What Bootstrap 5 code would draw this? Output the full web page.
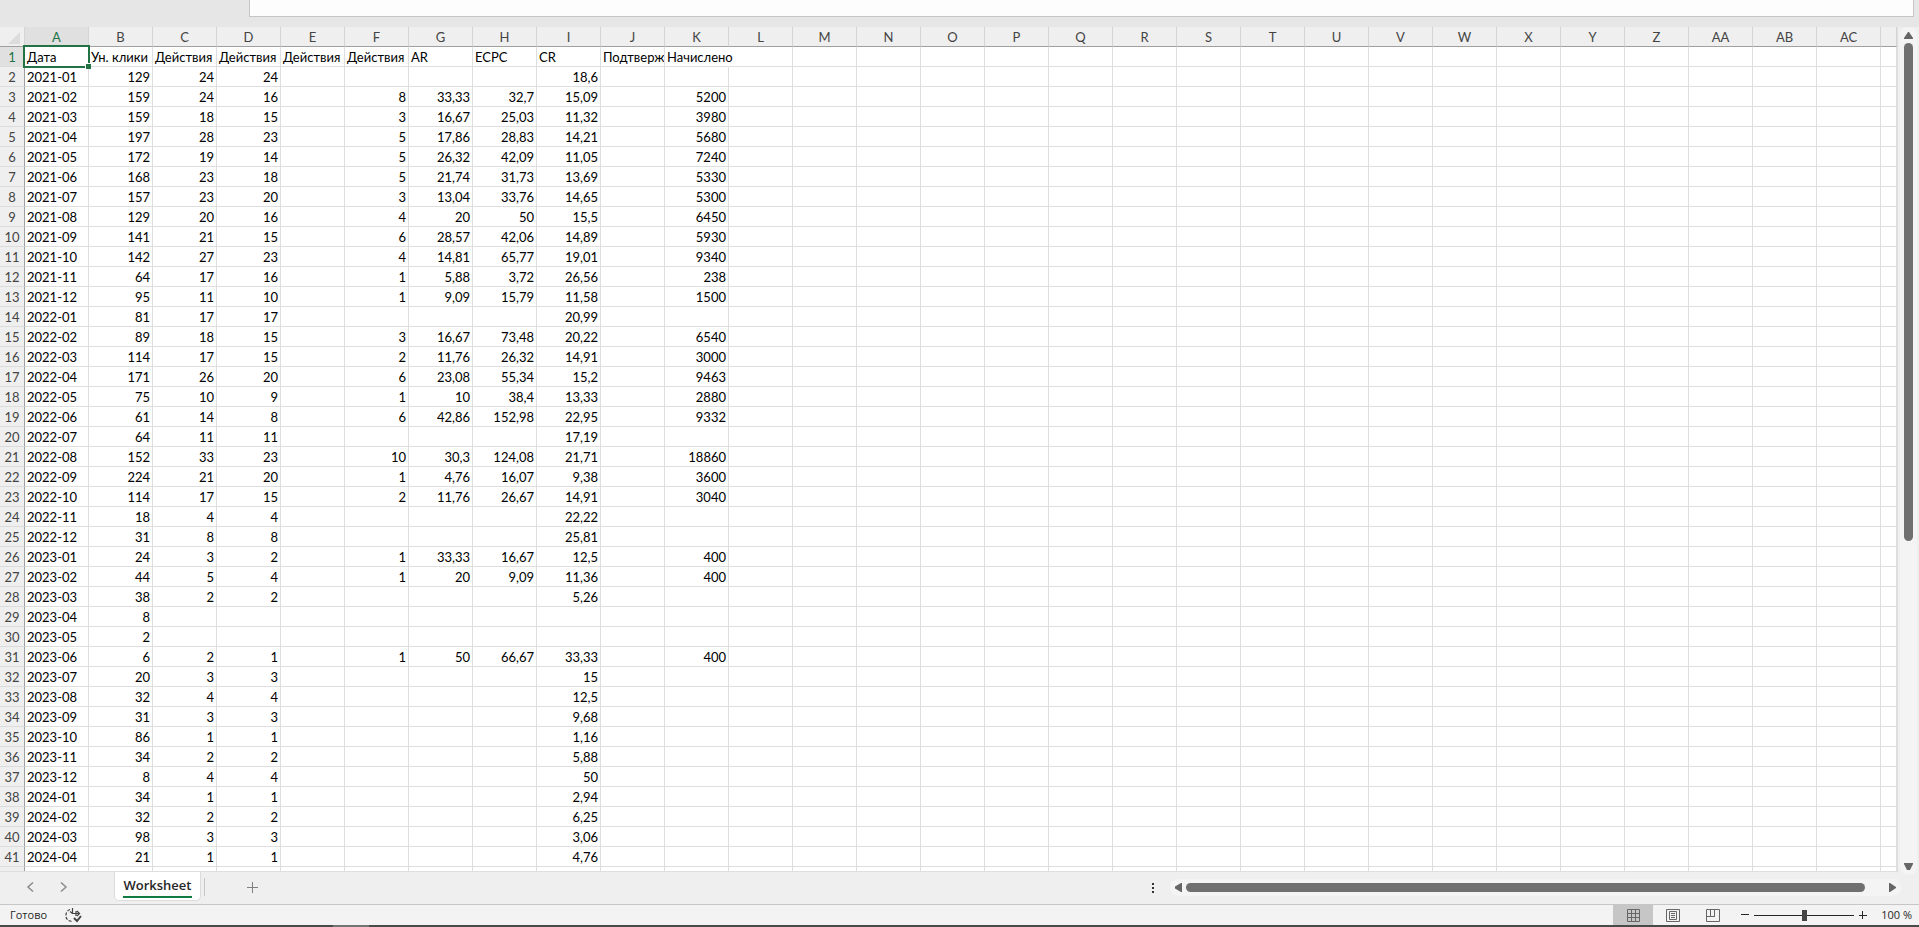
<!DOCTYPE html>
<html lang="ru">
<head>
<meta charset="utf-8">
<meta name="viewport" content="width=device-width, initial-scale=1">
<title>Worksheet</title>
<link href="https://cdn.jsdelivr.net/npm/bootstrap@5.3.0/dist/css/bootstrap.min.css" rel="stylesheet">
<style>
  body { font-family: "Open Sans", "Noto Sans", sans-serif; background: #efefef; color: #262626; }
  button { border: 0; background: none; padding: 0; color: #666; }
  svg { display: block; }

  .formula-strip { height: 27px; background: #e6e6e6; padding-left: 249px; padding-right: 5px; }
  .formula-box { height: 17px; border: 1px solid #c6c6c6; border-top: 0; border-radius: 0; background: #fdfdfd; outline: 0; }

  .main-area { min-height: 0; }
  .sheet-view { width: 0; border-right: 1px solid #dedede; border-bottom: 1px solid #dedede; background: #fff; }
  .sheet { table-layout: fixed; width: 100%; border-collapse: separate; border-spacing: 0; font: 13px/17px Lato, "Liberation Sans", sans-serif; color: #000; }
  .sheet .head-col { width: 25px; }
  .sheet .data-col { width: 64px; }
  .sheet th, .sheet td { height: 20px; padding: 2px 0 0; border: 0 solid #dedede; white-space: nowrap; }
  .sheet th { font-weight: 400; color: #444; text-align: center; background: #efefef; }
  .sheet thead th { border-bottom: 1px solid #a0a0a0; border-right: 1px solid #d4d4d4; }
  .sheet tbody th { border-bottom: 1px solid #dcdcdc; border-right: 1px solid #a0a0a0; }
  .sheet td { border-bottom-width: 1px; border-right-width: 1px; text-align: right; padding: 2px 2px 0; overflow: hidden; }
  .sheet td.label-cell { text-align: left; }
  .sheet td.spill { overflow: visible; border-right-color: transparent; }
  .sheet th.active { background: #e0e0e0; color: #217346; }
  .sheet td.selected { position: relative; overflow: visible; }
  .selected::before { content: ""; position: absolute; inset: -2px -2px -2px -2px; border: 2px solid #217346; }
  .selected::after { content: ""; position: absolute; right: -3px; bottom: -3px; width: 6px; height: 6px; background: #217346; border: 1px solid #fff; border-width: 1px 0 0 1px; }

  .scroll-col { width: 17px; margin: 0 2px -3px; padding: 5px 4px; background: #f4f4f4; border-radius: 8px; z-index: 1; }
  .scroll-row { height: 17px; padding: 4px 5px; background: #f4f4f4; border-radius: 8px; }
  .scroll-thumb { background: #707070; border-radius: 5px; }

  .tab-bar { height: 33px; padding-bottom: 2px; border-bottom: 1px solid #c6c6c6; }
  .nav-arrows { width: 114px; padding-left: 26px; gap: 22px; }
  .sheet-tab { width: 87px; height: 29px; background: #fff; border: 1px solid #dcdcdc; border-top: 0; border-radius: 0 0 5px 5px; }
  .sheet-tab span { display: block; font-size: 13px; line-height: 22px; font-weight: 600; color: #262626; border-bottom: 2px solid #107c41; margin: 0 8px; }
  .tab-split { width: 1px; height: 18px; background: #c6c6c6; margin: 6px 0 0 3px; }
  .add-sheet { margin-left: 42px; }
  .row-slot { width: 731px; margin-right: 18px; }

  .status { height: 20px; background: #f3f3f3; font-size: 11px; line-height: 20px; padding: 0 7px 0 10px; }
  .a11y-btn { margin-left: 18px; }
  .zoom-text { margin-left: 14px; }
  .view-btn { width: 40px; height: 20px; }
  .view-btn.on { background: #c6c6c6; }
  .zoom-range { appearance: none; -webkit-appearance: none; width: 100px; height: 20px; margin: 0 5px; background: linear-gradient(#262626, #262626) center / 100% 1px no-repeat; }
  .zoom-range::-webkit-slider-thumb { -webkit-appearance: none; width: 5px; height: 11px; background: #444; }
  .desk-edge { height: 2px; background: #4a4a4a; padding-left: 333px; }
  .desk-edge div { width: 36px; background: #747474; }
</style>
</head>
<body class="vh-100 d-flex flex-column overflow-hidden">

<header class="formula-strip flex-shrink-0">
  <input class="formula-box d-block w-100" type="text" aria-label="Строка формул">
</header>

<main class="main-area d-flex flex-grow-1">
  <div class="sheet-view flex-grow-1 overflow-hidden">
    <table class="sheet"><colgroup id="cols"></colgroup><thead id="head"></thead><tbody id="cells"></tbody></table>
  </div>
  <div class="scroll-col d-flex flex-column">
    <button type="button" aria-label="Вверх"><svg width="9" height="7"><path d="M4 0h1l4 6v1H0V6z" fill="#666"/></svg></button>
    <div class="scroll-thumb mt-1" style="flex:497"></div>
    <div style="flex:322"></div>
    <button type="button" aria-label="Вниз"><svg width="9" height="7"><path d="M0 0h9v1L6 7H3L0 1z" fill="#666"/></svg></button>
  </div>
</main>

<nav class="tab-bar d-flex flex-shrink-0" aria-label="Листы">
  <div class="nav-arrows d-flex align-items-center">
    <button type="button" aria-label="Предыдущий лист"><svg width="10" height="10" fill="none" stroke="#8c8c8c" stroke-width="1.500"><path d="M7 .5 2 5l5 4.500"/></svg></button>
    <button type="button" aria-label="Следующий лист"><svg width="10" height="10" fill="none" stroke="#8c8c8c" stroke-width="1.500"><path d="m3 .5 5 4.500-5 4.500"/></svg></button>
  </div>
  <button type="button" class="sheet-tab"><span>Worksheet</span></button>
  <div class="tab-split"></div>
  <button type="button" class="add-sheet d-flex align-items-center" aria-label="Новый лист"><svg width="11" height="11" stroke="#808080"><path d="M5.500 0v11M0 5.500h11"/></svg></button>
  <div class="ms-auto d-flex align-items-center">
    <svg class="me-3" width="2" height="11" fill="#333"><path d="M0 1h2v2H0zM0 5h2v2H0zM0 9h2v2H0z"/></svg>
    <div class="row-slot">
      <div class="scroll-row d-flex">
        <button type="button" aria-label="Влево"><svg width="7" height="9"><path d="M7 0v9H6L0 5.500v-2L6 0z" fill="#666"/></svg></button>
        <div class="scroll-thumb ms-1" style="flex:679"></div>
        <div style="flex:24"></div>
        <button type="button" aria-label="Вправо"><svg width="7" height="9"><path d="M0 0h1l6 4v1L1 9H0z" fill="#666"/></svg></button>
      </div>
    </div>
  </div>
</nav>

<footer class="status d-flex align-items-center flex-shrink-0">
  <span>Готово</span>
  <button type="button" class="a11y-btn" aria-label="Специальные возможности">
    <svg width="17" height="15" fill="none" stroke="#444" stroke-width="1.200"><path d="M5 1.500A6 6 0 0 0 1 8" stroke-dasharray="3 1.500"/><path d="M1 9q1 4 6 4.500" stroke-dasharray="3 1.500"/><path d="M7.500 0v5M5 3.500 7.500 5.500M7 5.500h7M11 3v5M12 3l2.500 2.500L12 8"/><path d="m9 10 3 3 4-5" stroke-width="2"/></svg>
  </button>
  <div class="ms-auto d-flex align-items-center">
    <button type="button" class="view-btn on d-flex justify-content-center align-items-center" aria-label="Обычный"><svg width="13" height="13" fill="none" stroke="#666"><path d="M.5.5h12v12H.5zM4.500 0v13M8.500 0v13M0 4.500h13M0 8.500h13"/></svg></button>
    <button type="button" class="view-btn d-flex justify-content-center align-items-center" aria-label="Разметка страницы"><svg width="14" height="13" fill="none" stroke="#666"><path d="M.5.5h13v12H.5zM3.500 2.500h7v8h-7zM5 4.500h4M5 6.500h4M5 8.500h4"/></svg></button>
    <button type="button" class="view-btn d-flex justify-content-center align-items-center" aria-label="Страничный режим"><svg width="14" height="13" fill="none" stroke="#666"><path d="M.5.5h13v12H.5zM4.500 0v7.500M8.500 0v7.500M0 7.500h9"/></svg></button>
    <button type="button" class="ms-2" aria-label="Уменьшить"><svg width="8" height="8" stroke="#262626"><path d="M0 3.500h8"/></svg></button>
    <input class="zoom-range" type="range" min="0" max="200" value="100" aria-label="Масштаб">
    <button type="button" aria-label="Увеличить"><svg width="8" height="8" stroke="#262626"><path d="M0 4.500h8M3.500 0v8"/></svg></button>
    <span class="zoom-text">100 %</span>
  </div>
</footer>
<div class="desk-edge d-flex flex-shrink-0"><div></div></div>

<script src="https://cdn.jsdelivr.net/npm/bootstrap@5.3.0/dist/js/bootstrap.bundle.min.js"></script>
<script>
  const letters = [..."ABCDEFGHIJKLMNOPQRSTUVWXYZ", "AA", "AB", "AC"];
  // Fields of a row: A B C D E F G H I J K
  const rows = `Дата|Ун. клики|Действия|Действия|Действия|Действия|AR|ECPC|CR|Подтверж|Начислено
2021-01|129|24|24|||||18,6
2021-02|159|24|16||8|33,33|32,7|15,09||5200
2021-03|159|18|15||3|16,67|25,03|11,32||3980
2021-04|197|28|23||5|17,86|28,83|14,21||5680
2021-05|172|19|14||5|26,32|42,09|11,05||7240
2021-06|168|23|18||5|21,74|31,73|13,69||5330
2021-07|157|23|20||3|13,04|33,76|14,65||5300
2021-08|129|20|16||4|20|50|15,5||6450
2021-09|141|21|15||6|28,57|42,06|14,89||5930
2021-10|142|27|23||4|14,81|65,77|19,01||9340
2021-11|64|17|16||1|5,88|3,72|26,56||238
2021-12|95|11|10||1|9,09|15,79|11,58||1500
2022-01|81|17|17|||||20,99
2022-02|89|18|15||3|16,67|73,48|20,22||6540
2022-03|114|17|15||2|11,76|26,32|14,91||3000
2022-04|171|26|20||6|23,08|55,34|15,2||9463
2022-05|75|10|9||1|10|38,4|13,33||2880
2022-06|61|14|8||6|42,86|152,98|22,95||9332
2022-07|64|11|11|||||17,19
2022-08|152|33|23||10|30,3|124,08|21,71||18860
2022-09|224|21|20||1|4,76|16,07|9,38||3600
2022-10|114|17|15||2|11,76|26,67|14,91||3040
2022-11|18|4|4|||||22,22
2022-12|31|8|8|||||25,81
2023-01|24|3|2||1|33,33|16,67|12,5||400
2023-02|44|5|4||1|20|9,09|11,36||400
2023-03|38|2|2|||||5,26
2023-04|8
2023-05|2
2023-06|6|2|1||1|50|66,67|33,33||400
2023-07|20|3|3|||||15
2023-08|32|4|4|||||12,5
2023-09|31|3|3|||||9,68
2023-10|86|1|1|||||1,16
2023-11|34|2|2|||||5,88
2023-12|8|4|4|||||50
2024-01|34|1|1|||||2,94
2024-02|32|2|2|||||6,25
2024-03|98|3|3|||||3,06
2024-04|21|1|1|||||4,76
`.split("\n").map(line => line.split("|"));

  const corner = '<th><svg class="ms-auto me-1" width="12" height="12"><path d="M12 0v12H0z" fill="#dcdcdc"/></svg></th>';
  document.getElementById("cols").innerHTML = '<col class="head-col">' + '<col class="data-col">'.repeat(letters.length) + "<col>";
  document.getElementById("head").innerHTML = "<tr>" + corner +
    letters.map((l, i) => `<th scope="col"${i ? "" : ' class="active"'}>${l}</th>`).join("") + "<th></th></tr>";
  document.getElementById("cells").innerHTML = rows.map((row, r) => {
    const last = r === rows.length - 1;
    const tds = Array.from({ length: letters.length + 1 }, (_, c) => {
      const cls = [];
      if (r === 0 || c === 0) cls.push("label-cell");
      if (r === 0 && c === 0) cls.push("selected");
      if (r === 0 && c === 10) cls.push("spill");
      return `<td class="${cls.join(" ")}">${row[c] || ""}</td>`;
    }).join("");
    return `<tr><th scope="row"${r ? "" : ' class="active"'}>${last ? "" : r + 1}</th>${tds}</tr>`;
  }).join("");
</script>
</body>
</html>
